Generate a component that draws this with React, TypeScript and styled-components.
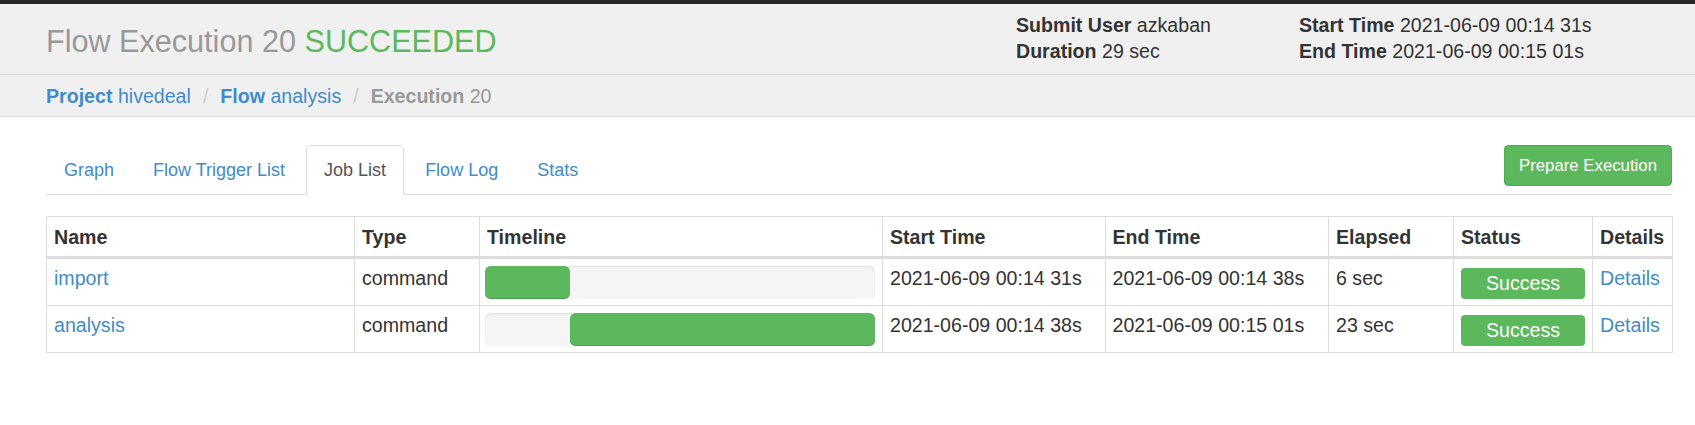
import React from "react";
import styled, { createGlobalStyle } from "styled-components";

interface Job {
  id: string;
  type: string;
  startMs: number;
  endMs: number;
  start: string;
  end: string;
  elapsed: string;
  status: string;
}

const FLOW_START = 0;
const FLOW_END = 29400;

const jobs: Job[] = [
  {
    id: "import",
    type: "command",
    startMs: 0,
    endMs: 6400,
    start: "2021-06-09 00:14 31s",
    end: "2021-06-09 00:14 38s",
    elapsed: "6 sec",
    status: "Success",
  },
  {
    id: "analysis",
    type: "command",
    startMs: 6400,
    endMs: 29400,
    start: "2021-06-09 00:14 38s",
    end: "2021-06-09 00:15 01s",
    elapsed: "23 sec",
    status: "Success",
  },
];

const columns = [
  { title: "Name", width: 308 },
  { title: "Type", width: 125 },
  { title: "Timeline", width: 403 },
  { title: "Start Time", width: 222.5 },
  { title: "End Time", width: 223.5 },
  { title: "Elapsed", width: 125 },
  { title: "Status", width: 139 },
  { title: "Details", width: 80 },
];

const tabs = ["Graph", "Flow Trigger List", "Job List", "Flow Log", "Stats"];

const GlobalStyle = createGlobalStyle`
  * {
    box-sizing: border-box;
  }
  body {
    margin: 0;
    background: #fff;
    color: #333;
    font-family: "Liberation Sans", Arial, Helvetica, sans-serif;
    font-size: 19.6px;
    line-height: 28px;
  }
`;

const TopStrip = styled.div`
  height: 4px;
  background: #262626;
`;

const Header = styled.header`
  height: 71px;
  background: #f0f0f0;
  border-bottom: 1px solid #ddd;
`;

const HeaderInner = styled.div`
  width: 1626px;
  height: 100%;
  margin-left: 46px;
  display: flex;
  align-items: center;
  justify-content: space-between;
`;

const Title = styled.h1`
  margin: 0;
  padding-top: 5px;
  font-size: 30.6px;
  font-weight: 400;
  line-height: 1.1;
  color: #999;
  white-space: nowrap;
`;

const FlowStatus = styled.span`
  color: #5cb85c;
`;

const InfoGrid = styled.div`
  display: grid;
  grid-template-columns: 283px 373px;
  line-height: 26px;
  margin-bottom: 2px;
`;

const InfoItem = styled.div`
  white-space: nowrap;

  b {
    font-weight: 700;
  }
`;

const Breadcrumbs = styled.nav`
  height: 42px;
  background: #f0f0f0;
  border-bottom: 1px solid #ddd;
`;

const CrumbRow = styled.div`
  width: 1626px;
  height: 100%;
  margin-left: 46px;
  display: flex;
  align-items: center;
  white-space: pre;
`;

const Crumb = styled.a<{ $current?: boolean }>`
  color: ${(p) => (p.$current ? "#999" : "#428bca")};
  text-decoration: none;

  b {
    font-weight: 700;
  }
`;

const Separator = styled.span`
  color: #ccc;
  padding: 0 12px;
`;

const Main = styled.main`
  width: 1626px;
  margin-left: 46px;
  padding-top: 28px;
`;

const NavRow = styled.div`
  display: flex;
  justify-content: space-between;
  align-items: flex-start;
  border-bottom: 1px solid #ddd;
`;

const TabList = styled.ul`
  display: flex;
  margin: 0 0 -1px;
  padding: 0;
  list-style: none;
`;

const Tab = styled.li<{ $active?: boolean }>`
  margin-right: 3px;
  padding: 11px 17px;
  font-size: 18px;
  line-height: 26px;
  border: 1px solid transparent;
  border-radius: 5.6px 5.6px 0 0;
  cursor: pointer;
  color: ${(p) => (p.$active ? "#555" : "#428bca")};
  background: ${(p) => (p.$active ? "#fff" : "transparent")};
  border-color: ${(p) => (p.$active ? "#ddd #ddd transparent" : "transparent")};
`;

const PrepareButton = styled.button`
  padding: 7px 14px;
  font-family: inherit;
  font-size: 16.8px;
  line-height: 25.2px;
  color: #fff;
  background: #5cb85c;
  border: 1px solid #4cae4c;
  border-radius: 4.2px;
  cursor: pointer;
`;

const JobTable = styled.table`
  width: 100%;
  margin-top: 21px;
  border: 1px solid #ddd;
  border-collapse: collapse;
  table-layout: fixed;
`;

const Col = styled.col<{ $width: number }>`
  width: ${(p) => p.$width}px;
`;

const Th = styled.th`
  padding: 6px 7px 5px;
  text-align: left;
  font-weight: 700;
  line-height: 28px;
  vertical-align: bottom;
  border: 1px solid #ddd;
  border-bottom: 3px solid #ddd;
  white-space: nowrap;
`;

const Td = styled.td`
  padding: 5px 7px 6px;
  line-height: 28px;
  vertical-align: top;
  border: 1px solid #ddd;
  white-space: nowrap;
`;

const Link = styled.a`
  color: #428bca;
  text-decoration: none;
  cursor: pointer;
`;

const TimelineTrack = styled.div`
  display: flex;
  height: 33px;
  margin: 2px 0 0 -2px;
  background: #f5f5f5;
  border-radius: 5.6px;
  box-shadow: inset 0 1px 2px rgba(0, 0, 0, 0.1);
`;

const TimelineBar = styled.div`
  height: 100%;
  background: #5cb85c;
  border-radius: 5.6px;
  box-shadow: inset 0 -1px 0 rgba(0, 0, 0, 0.15);
`;

const StatusLabel = styled.span`
  display: block;
  height: 31px;
  margin-top: 4px;
  line-height: 31px;
  text-align: center;
  color: #fff;
  background: #5cb85c;
  border-radius: 4px;
`;

const App: React.FC = () => {
  const total = FLOW_END - FLOW_START;

  return (
    <>
      <GlobalStyle />
      <TopStrip />
      <Header>
        <HeaderInner>
          <Title>
            Flow Execution 20 <FlowStatus>SUCCEEDED</FlowStatus>
          </Title>
          <InfoGrid>
            <InfoItem>
              <b>Submit User</b> azkaban
            </InfoItem>
            <InfoItem>
              <b>Start Time</b> 2021-06-09 00:14 31s
            </InfoItem>
            <InfoItem>
              <b>Duration</b> 29 sec
            </InfoItem>
            <InfoItem>
              <b>End Time</b> 2021-06-09 00:15 01s
            </InfoItem>
          </InfoGrid>
        </HeaderInner>
      </Header>
      <Breadcrumbs>
        <CrumbRow>
          <Crumb>
            <b>Project</b> hivedeal
          </Crumb>
          <Separator>/</Separator>
          <Crumb>
            <b>Flow</b> analysis
          </Crumb>
          <Separator>/</Separator>
          <Crumb $current>
            <b>Execution</b> 20
          </Crumb>
        </CrumbRow>
      </Breadcrumbs>
      <Main>
        <NavRow>
          <TabList>
            {tabs.map((t) => (
              <Tab key={t} $active={t === "Job List"}>
                {t}
              </Tab>
            ))}
          </TabList>
          <PrepareButton>Prepare Execution</PrepareButton>
        </NavRow>
        <JobTable>
          <colgroup>
            {columns.map((c) => (
              <Col key={c.title} $width={c.width} />
            ))}
          </colgroup>
          <thead>
            <tr>
              {columns.map((c) => (
                <Th key={c.title}>{c.title}</Th>
              ))}
            </tr>
          </thead>
          <tbody>
            {jobs.map((job) => (
              <tr key={job.id}>
                <Td>
                  <Link>{job.id}</Link>
                </Td>
                <Td>{job.type}</Td>
                <Td>
                  <TimelineTrack>
                    <TimelineBar
                      style={{
                        marginLeft: `${((job.startMs - FLOW_START) / total) * 100}%`,
                        width: `${((job.endMs - job.startMs) / total) * 100}%`,
                      }}
                    />
                  </TimelineTrack>
                </Td>
                <Td>{job.start}</Td>
                <Td>{job.end}</Td>
                <Td>{job.elapsed}</Td>
                <Td>
                  <StatusLabel>{job.status}</StatusLabel>
                </Td>
                <Td>
                  <Link>Details</Link>
                </Td>
              </tr>
            ))}
          </tbody>
        </JobTable>
      </Main>
    </>
  );
};

export default App;
